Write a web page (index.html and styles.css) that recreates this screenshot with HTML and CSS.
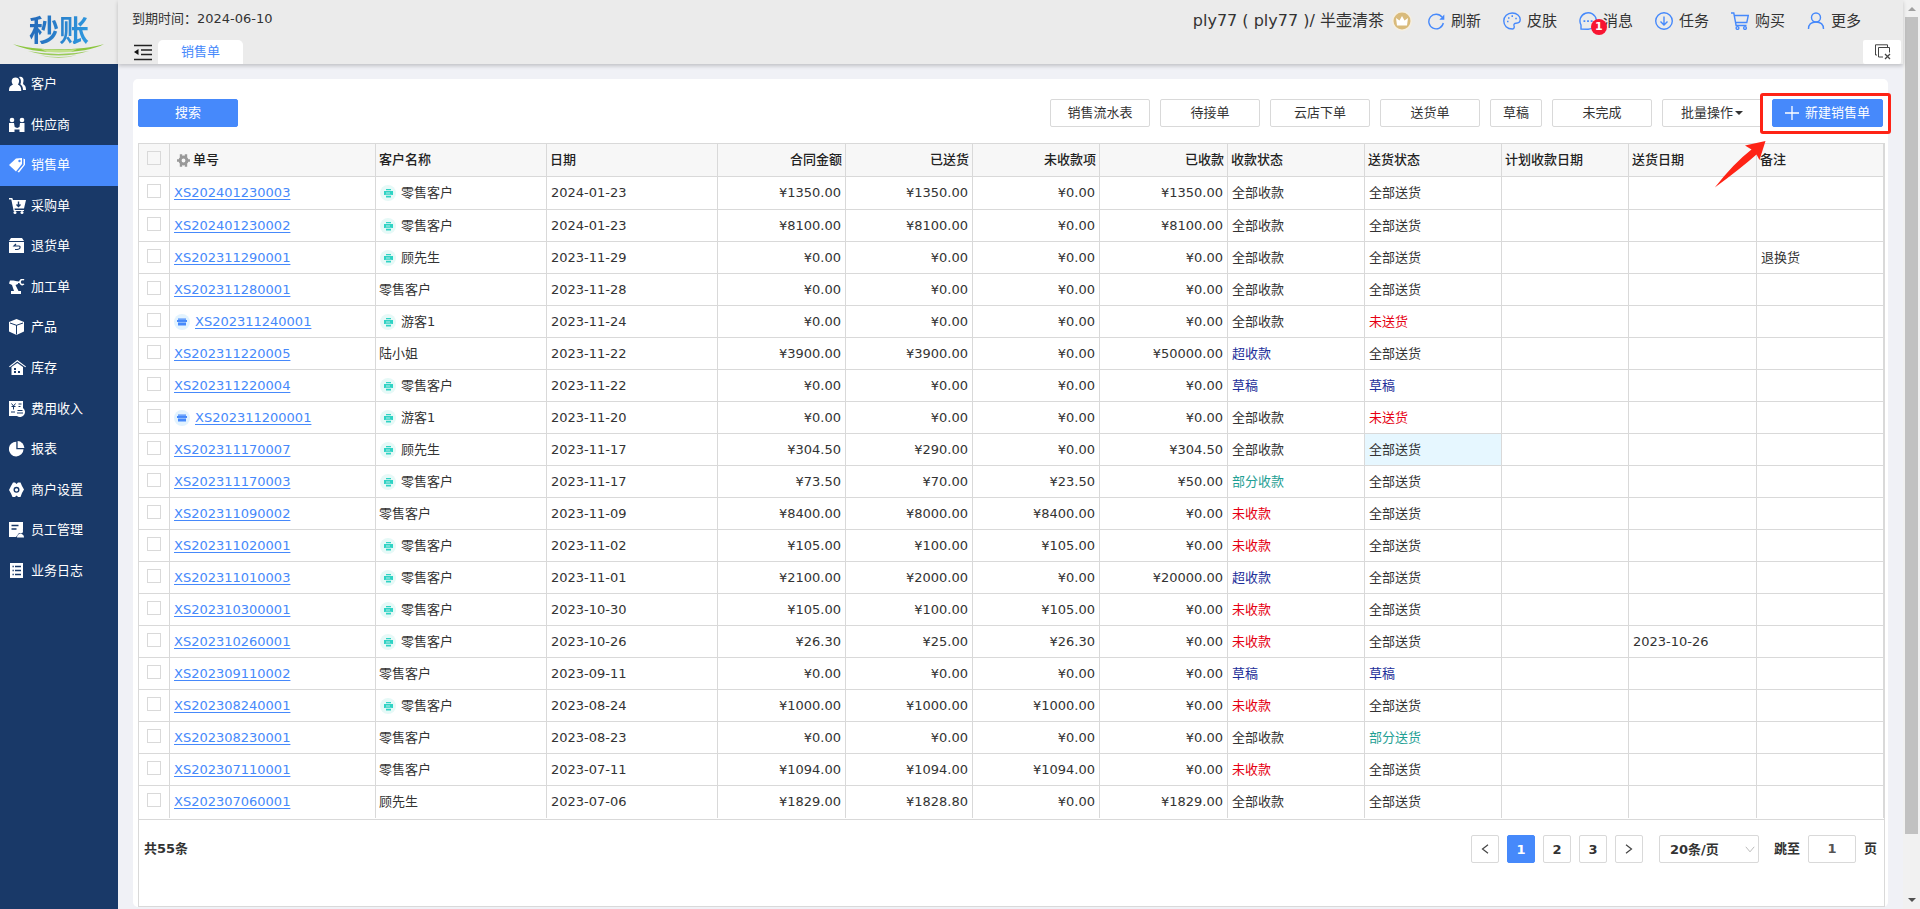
FILE: index.html
```html
<!DOCTYPE html>
<html lang="zh-CN">
<head>
<meta charset="utf-8">
<title>销售单</title>
<link rel="stylesheet" href="styles.css">
</head>
<body>
<svg class="sprite" aria-hidden="true">
  <symbol id="i-print" viewBox="0 0 16 16"><circle cx="8" cy="8" r="8" fill="#e6f9f7"/><path fill="#2fd3c4" d="M6 4h5v1.300H6zM4 6h9v4H4zM6 10.500h5v2H6z"/><path d="M6 8h4M5.500 10.200h6" stroke="#d5f5f1" stroke-width=".8"/></symbol>
  <symbol id="i-shop" viewBox="0 0 16 16"><circle cx="8" cy="8" r="8" fill="#e3f3fe"/><path fill="#4689fb" d="M4 4.500h8v1.200H4zM3 6h10v2H3zM4 8h8v3.500H4z"/><path d="M4 8.400h8" stroke="#a9cdfd" stroke-width=".8"/></symbol>
</svg>
<div class="app">
  <div class="frame">
    <div class="logo">
      <span class="logo-text">秒账</span>
      <svg class="logo-wave" width="92" height="17" viewBox="0 0 92 17"><g fill="#8cc63f"><path d="M0 2C20 9 70 9 91 2C72 13 20 13 0 2z"/><path d="M15 9Q45 15 76 9Q46 18 15 9z" opacity=".85"/><path d="M26 13Q46 17 64 13Q46 19 26 13z" opacity=".6"/></g><path d="M28 7q18 2 36 0l-6 3q-12 1-24 0z" fill="#d5eba9" opacity=".7"/></svg>
    </div>
    <header class="header">
      <div class="header-top">
        <span class="expire">到期时间：2024-06-10</span>
        <div class="user">
          <span class="user-name">ply77 ( ply77 )/ 半壶清茶</span>
          <svg width="20" height="20" viewBox="0 0 20 20"><circle cx="10" cy="10" r="10" fill="#f6efe0"/><circle cx="10" cy="10" r="8.500" fill="#d9bb7c"/><path d="M5 14.500 4 7l3.500 2.500L10 5l2.500 4.500L16 7l-1 7.500z" fill="#fff"/></svg>
        </div>
        <nav class="tools">
          <a href="#" class="tool"><svg viewBox="0 0 18 18"><path d="M15 5.200A7.300 7.300 0 1 0 16.300 11"/><path d="M17.300 2.500v5.300h-5z" fill="#4689fb" stroke="none"/></svg>刷新</a>
          <a href="#" class="tool"><svg viewBox="0 0 18 18"><path d="M9.500 17C4 17 .8 13.500.8 9S4.500 1 9.200 1s8 3 8 6.500-2 3.700-4.200 3.700c-1.600 0-2.300 1-2 2.200.5 1.600.3 3.600-1.500 3.600z"/><path d="M4 9.500h1.500M5 6h1.500M8.500 4.200H10M12.300 6.500h1.500" stroke-width="1.700"/></svg>皮肤</a>
          <a href="#" class="tool"><svg viewBox="0 0 18 18"><path d="M2 17V13A8.200 8.200 0 1 1 9 17.200z"/><path d="M4.500 9.200h1.800M8.100 9.200h1.800M11.700 9.200h1.800" stroke-width="1.800"/></svg>消息<span class="badge">1</span></a>
          <a href="#" class="tool"><svg viewBox="0 0 18 18"><circle cx="9" cy="9" r="8.300"/><path d="M9 4.500v8.500M5.500 9.500 9 13l3.500-3.500"/></svg>任务</a>
          <a href="#" class="tool"><svg viewBox="0 0 18 18"><path d="M0 1h2.800l2.300 12.500h10.400M3.500 3.500h13.800l-1.500 7H4.500"/><circle cx="6.500" cy="16" r="1.400"/><circle cx="14" cy="16" r="1.400"/></svg>购买</a>
          <a href="#" class="tool"><svg viewBox="0 0 18 18"><circle cx="9" cy="5.500" r="4.500"/><path d="M1.500 17c0-4.500 3-7 7.500-7s7.500 2.500 7.500 7"/></svg>更多</a>
        </nav>
      </div>
      <div class="tabs">
        <button class="icon-btn" aria-label="收起菜单"><svg width="18" height="17" viewBox="0 0 18 17"><path d="M0 1.500h18M7 6h11M7 10.500h11M0 15.500h18" stroke="#222" stroke-width="1.700"/><path d="M0 8l4.500-3v6z" fill="#111"/></svg></button>
        <a href="#" class="tab">销售单</a>
        <button class="close-tabs" aria-label="关闭标签"><svg width="17" height="16" viewBox="0 0 17 16" fill="none" stroke="#444"><path d="M3 11H1.500V.8h12V3"/><path d="M9 13H4.500V3.500h11v5"/><path d="M11 10l5 5M16 10l-5 5" stroke-width="1.300"/></svg></button>
      </div>
    </header>
    <div class="side">
    <nav class="menu">
      <a href="#"><svg viewBox="0 0 17 16"><path d="M10 1c3-.8 5 1 4.500 4-.2 1.800-.8 2.700 0 3.500 1.500 1 2.500 2 2.500 5.500h-3c0-3-1-4.500-2.700-5.700 1.200-2.500.9-5.300-1.300-7.300z"/><path d="M6.500 1.500c4.500 0 4.300 5 2.300 7 1.700 1 3.500 1.500 3.500 6.500H0c0-4.500 1.500-5.300 4-6.500-2-2-2-7 2.500-7z"/></svg>客户</a>
      <a href="#"><svg viewBox="0 0 17 16"><circle cx="3" cy="3" r="2.300"/><circle cx="13" cy="3" r="2.300"/><path d="M0 6h5l.7 4 2.500 1 2.300-1L11 6h4.500v9h-5v-2.500H5.500V15H0z"/></svg>供应商</a>
      <a href="#" class="active"><svg viewBox="0 0 17 16"><path d="M0 8 7 1.500 13 1v6L7 14.500z"/><path d="M14.500 1.500l1.500.8v5.500L10 15.500 8.500 14.800l6-7z"/><circle cx="10.500" cy="4" r="1.200" fill="#4689fb"/></svg>销售单</a>
      <a href="#"><svg viewBox="0 0 17 16"><path d="M0 0h3.300l.7 2h13l-2 8.500H5.500L5.800 12H15v1H4.700L2.300 1.500H0z"/><circle cx="6" cy="14.500" r="1.500"/><circle cx="13" cy="14.500" r="1.500"/><path d="M9.500 3.500v5M7.500 6.500l2 2 2-2" fill="none" stroke="#193968" stroke-width="1.400"/></svg>采购单</a>
      <a href="#"><svg viewBox="0 0 17 16"><path d="M2 0h11l2 3H0z"/><path d="M0 4h15v11H0z"/><path d="M7 6 5 8h5q1.200 0 1 1.700T6 11.500" fill="none" stroke="#193968" stroke-width="1.200"/></svg>退货单</a>
      <a href="#"><svg viewBox="0 0 17 16"><path d="M1 1.500h3.500L9 2.500V5L6.500 6l3 6H12v3H2v-3h3L3 6 0 4.500z"/><path d="M8.500 3.500 12 2.500M15 1a2.500 2.500 0 1 0 0 4" fill="none" stroke="#fff" stroke-width="1.500"/></svg>加工单</a>
      <a href="#"><svg viewBox="0 0 17 16"><path d="M7.500 0 15 3v9.500L7.500 16 0 12.500V3z"/><path d="M1 4l6.500 2.300L14 4M7.500 6v9.500" fill="none" stroke="#193968" stroke-width="1"/></svg>产品</a>
      <a href="#"><svg viewBox="0 0 17 16"><path d="M8.300 0 17 6.500l-.7.800-8-5.800-7.500 5.800L0 6.500z"/><path d="M8.300 3 14 7v8H2.500V7z"/><path d="M5 8h2v2H5zM5 11h2v2H5zM9 11h2v2H9z" fill="#193968"/></svg>库存</a>
      <a href="#"><svg viewBox="0 0 17 16"><path d="M0 0h14v7a5 5 0 1 1-6 8H0z"/><path d="M2.500 2.500l2 2.500 2-2.500M2.500 5.500h4M4.500 5v3.500M9.500 3h3M9.500 5.500h2M2 11h4M8.500 9.500h5M8 12h6" fill="none" stroke="#193968"/></svg>费用收入</a>
      <a href="#"><svg viewBox="0 0 17 16"><path d="M7.300.8V8.200H14.500A7.300 7.300 0 1 1 7.300.8z"/><path d="M8.600 0a7.200 7.200 0 0 1 6.800 6.900H8.600z"/></svg>报表</a>
      <a href="#"><svg viewBox="0 0 17 16"><path d="M4 .5h2L7.500 2 9 .5h2.500L13 4l2 3.500-2 3.500-1.500 4H9.200L7.500 13.500 6 15H3.500L2 11.500 0 8l2-4z"/><circle cx="7.500" cy="7.800" r="2.300" fill="none" stroke="#193968" stroke-width="1.400"/></svg>商户设置</a>
      <a href="#"><svg viewBox="0 0 17 16"><path d="M0 0h14v8a3 3 0 0 0-4 3l-3 4H0z"/><circle cx="11.500" cy="9" r="2.500"/><path d="M8 15.500c0-5 7-5 7 0z"/><path d="M2.500 3.500h7M2.500 7h5" stroke="#193968" stroke-width="1.300"/></svg>员工管理</a>
      <a href="#"><svg viewBox="0 0 17 16"><path d="M1 0h13v15H1z"/><path d="M3.500 3.500h1.300M6 3.500h6M3.500 7.500h1.300M6 7.500h6M3.500 11.500h1.300M6 11.500h6" stroke="#193968" stroke-width="1.300"/></svg>业务日志</a>
    </nav>
    </div>
    <main class="main">
      <section class="card">
        <div class="toolbar">
          <button class="btn primary">搜索</button>
          <div class="actions">
            <button class="btn">销售流水表</button>
            <button class="btn">待接单</button>
            <button class="btn">云店下单</button>
            <button class="btn">送货单</button>
            <button class="btn small">草稿</button>
            <button class="btn">未完成</button>
            <button class="btn">批量操作<span class="caret"></span></button>
            <div class="create">
              <button class="btn primary wide"><svg width="14" height="14" viewBox="0 0 14 14"><path d="M7 0v14M0 7h14" stroke="#fff" stroke-width="1.300"/></svg>新建销售单</button>
              <span class="mark"></span>
              <svg class="arrow" width="54" height="48" viewBox="0 0 54 48"><path fill="#fe2316" d="M.8 47.500Q20 23 37.500 9.500L31 5.500 51.500 1 45.500 20 42.500 14.500Q26 29 .8 47.500z"/></svg>
            </div>
          </div>
        </div>
        <div class="grid">
          <table>
            <colgroup><col class="w-check"><col class="w-no"><col class="w-name"><col class="w-name"><col class="w-sum"><col class="w-date"><col class="w-date"><col class="w-sum"><col class="w-state"><col class="w-state"><col class="w-date"><col class="w-sum"><col></colgroup>
            <thead><tr>
              <th class="check"><input type="checkbox" aria-label="全选"></th>
              <th><span class="with-icon head-no"><svg width="13" height="13" viewBox="0 0 13 13" fill="none" stroke="#999"><circle cx="6.500" cy="6.500" r="3.400" stroke-width="3"/><path d="M4 .3V3M9 .3V3M4 10v2.700M9 10v2.700M0 6.500h2.500M10.500 6.500H13" stroke-width="2.400"/></svg>单号</span></th>
              <th>客户名称</th><th>日期</th><th class="num">合同金额</th><th class="num">已送货</th><th class="num">未收款项</th><th class="num">已收款</th><th>收款状态</th><th>送货状态</th><th>计划收款日期</th><th>送货日期</th><th>备注</th>
            </tr></thead>
            <tbody id="rows"></tbody>
          </table>
          <footer class="pager">
            <span>共55条</span>
            <div class="pages">
              <button class="page" aria-label="上一页"><svg width="8" height="10" viewBox="0 0 8 10"><path d="M7 .8 1.500 5 7 9.200"/></svg></button>
              <button class="page current">1</button>
              <button class="page">2</button>
              <button class="page">3</button>
              <button class="page" aria-label="下一页"><svg width="8" height="10" viewBox="0 0 8 10"><path d="M1 .8 6.500 5 1 9.200"/></svg></button>
              <div class="size"><select aria-label="每页条数"><option>20条/页</option><option>50条/页</option></select><svg width="10" height="7" viewBox="0 0 10 7"><path d="M.8.800 5 5.800 9.200.8"/></svg></div>
              <label for="jump">跳至</label>
              <input id="jump" class="jump" type="text" value="1">
              <span>页</span>
            </div>
          </footer>
        </div>
      </section>
    </main>
  </div>
  <div class="scroll" aria-hidden="true"><i class="up"></i><b></b><i class="down"></i></div>
</div>
<script src="app.js"></script>
</body>
</html>
```
FILE: styles.css
```css
* { box-sizing: border-box; }
body {
  margin: 0;
  font: 13px/20px "DejaVu Sans", "Noto Sans CJK SC", sans-serif;
  color: #333;
  background: #f0f1f6;
}
button, input, select { font: inherit; color: inherit; }
button { cursor: pointer; padding: 0; }
a { color: inherit; text-decoration: none; }
svg { flex: none; display: block; }
.sprite { position: absolute; width: 0; height: 0; }

.app { display: flex; min-height: 100vh; }
.frame { flex: 1; min-width: 0; display: grid; grid-template-columns: 118px minmax(0, 1fr); grid-template-rows: 64px 1fr; }

.logo { background: #ebebeb; display: flex; flex-direction: column; align-items: center; padding-top: 12px; }
.logo-text {
  font: bold 30px/32px "Noto Sans CJK SC", sans-serif;
  background: linear-gradient(100deg, #2468b8, #2f9ae0);
  -webkit-background-clip: text; background-clip: text; color: transparent;
}
.logo-wave { margin-top: -2px; }

.header { background: #ebebeb; display: flex; flex-direction: column; justify-content: space-between; box-shadow: 0 2px 4px rgba(0, 0, 0, .2); position: relative; z-index: 1; }
.header-top { display: flex; align-items: flex-start; padding: 9px 42px 0 14px; }
.expire { margin-right: auto; }
.user { display: flex; align-items: center; gap: 8px; margin: 1px 15px 0 0; }
.user-name { font-size: 16px; line-height: 22px; }
.tools { display: flex; gap: 22px; margin-top: 1px; }
.tool { display: flex; align-items: center; gap: 6px; position: relative; font-size: 15px; line-height: 22px; }
.tool svg { width: 18px; height: 18px; fill: none; stroke: #4689fb; stroke-width: 1.4; }
.badge { position: absolute; left: 12px; top: 9px; width: 16px; height: 16px; border-radius: 50%; background: #f81532; color: #fff; font-size: 11px; line-height: 16px; font-weight: bold; text-align: center; }
.tabs { display: flex; align-items: stretch; height: 24px; padding: 0 2px 0 16px; }
.icon-btn { border: 0; background: none; margin-right: 6px; }
.tab { width: 85px; background: #fff; color: #4689fb; border-radius: 5px 5px 0 0; text-align: center; line-height: 24px; }
.close-tabs { margin-left: auto; width: 38px; border: 0; border-radius: 2px; background: #fff; display: grid; place-items: center; }

.side { background: #193968; }
.menu { display: grid; grid-auto-rows: 1fr; height: 527px; }
.menu a { display: flex; align-items: center; gap: 5px; padding-left: 9px; color: #fff; }
.menu a.active { background: #4689fb; }
.menu svg { width: 17px; height: 16px; fill: #fff; }

.main { padding: 15px 15px 2px; display: flex; min-width: 0; }
.card { flex: 1; min-width: 0; background: #fff; border-radius: 5px; padding: 20px 3px 0 5px; display: flex; flex-direction: column; }
.toolbar { display: flex; justify-content: space-between; padding-right: 2px; margin-bottom: 16px; }
.actions { display: flex; gap: 10px; }
.btn { height: 28px; width: 100px; border: 1px solid #d9d9d9; border-radius: 2px; background: #fff; line-height: 26px; white-space: nowrap; }
.btn.small { width: 52px; }
.btn.primary { background: #4689fb; border-color: #4689fb; color: #fff; }
.btn.wide { width: 111px; display: flex; align-items: center; justify-content: center; gap: 6px; }
.caret { display: inline-block; border: 4px solid transparent; border-top-color: #333; border-bottom: 0; margin-left: 2px; vertical-align: 2px; }
.create { position: relative; }
.mark { position: absolute; inset: -6px -8px -7px -12px; border: 3px solid #fe2316; border-radius: 3px; pointer-events: none; }
.arrow { position: absolute; left: -58px; top: 41px; pointer-events: none; }

.grid { flex: 1; border: 1px solid #d9d9d9; display: flex; flex-direction: column; }
table { width: 100%; table-layout: fixed; border-collapse: separate; border-spacing: 0; margin-bottom: 1px; }
.w-check { width: 31px; }
.w-no { width: 206px; }
.w-name { width: 171px; }
.w-sum { width: 128px; }
.w-date { width: 127px; }
.w-state { width: 137px; }
th, td { height: 32px; padding: 0 4px; border: solid #d9d9d9; border-width: 0 1px 1px 0; text-align: left; white-space: nowrap; overflow: hidden; }
th { height: 33px; padding: 0 3px; background: #f7f7f7; font-weight: 500; color: #222; }
tbody tr:first-child td { height: 33px; }
tbody tr:last-child td { border-bottom: 0; }
.num { text-align: right; }
td.customer { padding-left: 3px; }
.with-icon { display: flex; align-items: center; gap: 5px; }
.customer .with-icon { padding-left: 1px; }
.head-no { padding-left: 4px; gap: 3px; }
td a { color: #4689fb; text-decoration: underline; text-underline-offset: 2px; }
.check { padding: 0 0 4px; }
.check input { appearance: none; display: block; width: 14px; height: 14px; margin: 0 auto; border: 1px solid #d9d9d9; background: #fff; }
thead .check input { background: #f7f7f7; }
.red { color: #e60012; }
.blue { color: #1d2f9a; }
.green { color: #1fa094; }
.hover { background: #e6f7ff; }

.pager { flex: 1; border-top: 1px solid #d9d9d9; padding: 15px 7px 40px 5px; display: flex; justify-content: space-between; align-items: flex-start; font-weight: bold; line-height: 28px; }
.pages { display: flex; gap: 8px; }
.page { width: 28px; height: 28px; border: 1px solid #d9d9d9; border-radius: 2px; background: #fff; font-weight: bold; display: grid; place-items: center; }
.page.current { background: #4689fb; border-color: #4689fb; color: #fff; }
.page svg { fill: none; stroke: #444; stroke-width: 1.2; }
.size { position: relative; margin: 0 7px 0 8px; }
.size select { appearance: none; width: 100px; height: 28px; border: 1px solid #d9d9d9; border-radius: 2px; background: #fff; padding: 0 10px; font-weight: bold; }
.size svg { position: absolute; right: 4px; top: 11px; fill: none; stroke: #bbb; pointer-events: none; }
.jump { width: 48px; height: 28px; border: 1px solid #d9d9d9; border-radius: 2px; text-align: center; font-weight: bold; color: #555; }

.scroll { width: 17px; background: #f1f1f1; display: flex; flex-direction: column; align-items: center; }
.scroll b { width: 13px; height: 817px; background: #c1c1c1; }
.scroll i { border: 4px solid transparent; }
.scroll .up { border-top: 0; border-bottom-color: #a0a0a0; margin: 7px 0 6px; }
.scroll .down { border-bottom: 0; border-top-color: #505050; margin: auto 0 7px; }
```
FILE: app.js
```js
// [number, shop order, printed, customer, contract, delivered, unpaid, paid, pay state, delivery state, delivery date, note]
const rows = [
  ["202401230003", 0, 1, "零售客户", "1350.00", "1350.00", "0.00", "1350.00", "全部收款", "全部送货"],
  ["202401230002", 0, 1, "零售客户", "8100.00", "8100.00", "0.00", "8100.00", "全部收款", "全部送货"],
  ["202311290001", 0, 1, "顾先生", "0.00", "0.00", "0.00", "0.00", "全部收款", "全部送货", "", "退换货"],
  ["202311280001", 0, 0, "零售客户", "0.00", "0.00", "0.00", "0.00", "全部收款", "全部送货"],
  ["202311240001", 1, 1, "游客1", "0.00", "0.00", "0.00", "0.00", "全部收款", "未送货"],
  ["202311220005", 0, 0, "陆小姐", "3900.00", "3900.00", "0.00", "50000.00", "超收款", "全部送货"],
  ["202311220004", 0, 1, "零售客户", "0.00", "0.00", "0.00", "0.00", "草稿", "草稿"],
  ["202311200001", 1, 1, "游客1", "0.00", "0.00", "0.00", "0.00", "全部收款", "未送货"],
  ["202311170007", 0, 1, "顾先生", "304.50", "290.00", "0.00", "304.50", "全部收款", "全部送货"],
  ["202311170003", 0, 1, "零售客户", "73.50", "70.00", "23.50", "50.00", "部分收款", "全部送货"],
  ["202311090002", 0, 0, "零售客户", "8400.00", "8000.00", "8400.00", "0.00", "未收款", "全部送货"],
  ["202311020001", 0, 1, "零售客户", "105.00", "100.00", "105.00", "0.00", "未收款", "全部送货"],
  ["202311010003", 0, 1, "零售客户", "2100.00", "2000.00", "0.00", "20000.00", "超收款", "全部送货"],
  ["202310300001", 0, 1, "零售客户", "105.00", "100.00", "105.00", "0.00", "未收款", "全部送货"],
  ["202310260001", 0, 1, "零售客户", "26.30", "25.00", "26.30", "0.00", "未收款", "全部送货", "2023-10-26"],
  ["202309110002", 0, 0, "零售客户", "0.00", "0.00", "0.00", "0.00", "草稿", "草稿"],
  ["202308240001", 0, 1, "零售客户", "1000.00", "1000.00", "1000.00", "0.00", "未收款", "全部送货"],
  ["202308230001", 0, 0, "零售客户", "0.00", "0.00", "0.00", "0.00", "全部收款", "部分送货"],
  ["202307110001", 0, 0, "零售客户", "1094.00", "1094.00", "1094.00", "0.00", "未收款", "全部送货"],
  ["202307060001", 0, 0, "顾先生", "1829.00", "1828.80", "0.00", "1829.00", "全部收款", "全部送货"]
];
const tone = s => s[0] === "未" ? "red" : s[0] === "部" ? "green" : s[0] === "全" ? "" : "blue";
const icon = id => `<svg width="16" height="16"><use href="#${id}"/></svg>`;
document.getElementById("rows").innerHTML = rows.map(r => {
  const [no, shop, printed, name, a, b, c, d, pay, send, day = "", note = ""] = r;
  const date = `${no.slice(0, 4)}-${no.slice(4, 6)}-${no.slice(6, 8)}`;
  const link = `<a href="#">XS${no}</a>`;
  return `<tr><td class="check"><input type="checkbox" aria-label="XS${no}"></td>
    <td>${shop ? `<span class="with-icon">${icon("i-shop")}${link}</span>` : link}</td>
    <td class="customer">${printed ? `<span class="with-icon">${icon("i-print")}${name}</span>` : name}</td>
    <td>${date}</td>${[a, b, c, d].map(v => `<td class="num">¥${v}</td>`).join("")}
    <td class="${tone(pay)}">${pay}</td>
    <td class="${tone(send)}${no === "202311170007" ? " hover" : ""}">${send}</td>
    <td></td><td>${day}</td><td>${note}</td></tr>`;
}).join("");
```
